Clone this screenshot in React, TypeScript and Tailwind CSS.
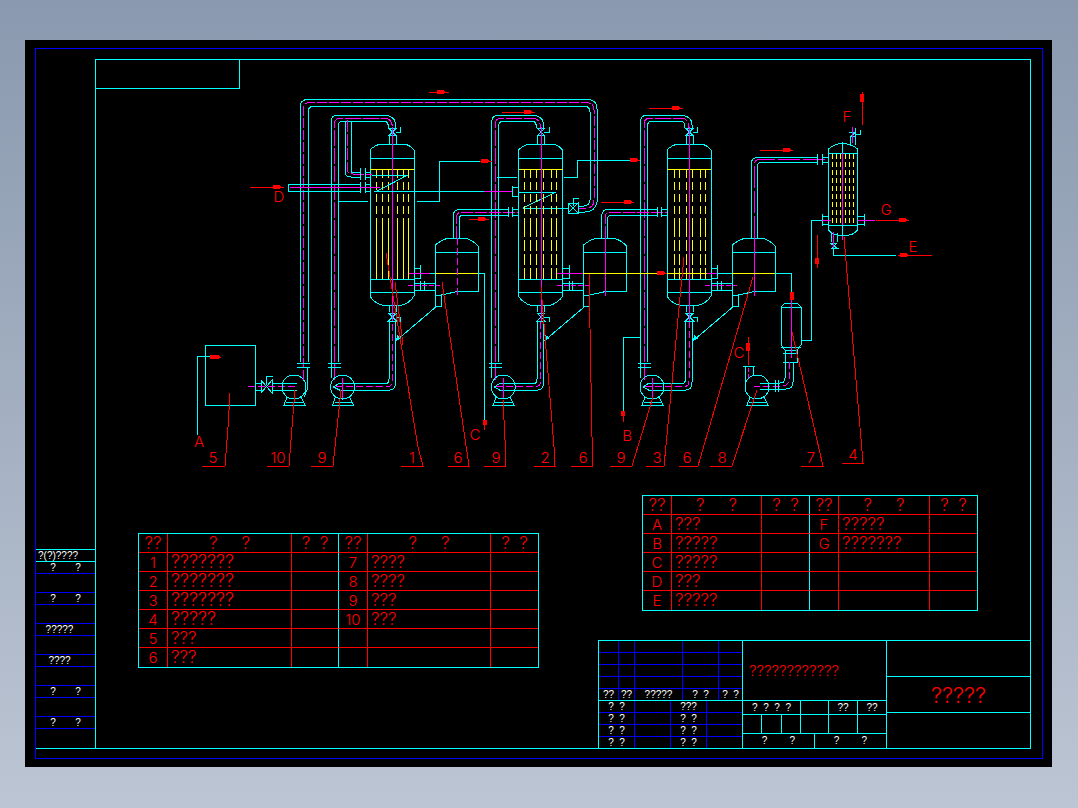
const CY = '#00ffff'
const MG = '#ff00ff'
const YL = '#ffff00'
const RD = '#ff0000'
const DASH = '7 3'

function L({ d, c = CY, dash }: { d: string; c?: string; dash?: string }) {
  return <path d={d} fill="none" stroke={c} strokeWidth={1} strokeDasharray={dash} />
}

// red flow arrow, thin tail with a short thick head
function FlowH({ x1, x2, y, hx, hw = 9 }: { x1: number; x2: number; y: number; hx: number; hw?: number }) {
  return (
    <g>
      <L d={`M${x1} ${y}H${x2}`} c={RD} />
      <path d={`M${hx} ${y - 2}H${hx + hw - 3}L${hx + hw} ${y}L${hx + hw - 3} ${y + 2}H${hx}Z`} fill={RD} />
    </g>
  )
}

function FlowV({ x, y1, y2, hy, hh = 8 }: { x: number; y1: number; y2: number; hy: number; hh?: number }) {
  return (
    <g>
      <L d={`M${x} ${y1}V${y2}`} c={RD} />
      <path d={`M${x - 2} ${hy}H${x + 2}V${hy + hh}H${x - 2}Z`} fill={RD} />
    </g>
  )
}

function Label({ x, y, t }: { x: number; y: number; t: string }) {
  return (
    <text x={x} y={y} textAnchor="middle" fill={RD} fontSize={15} fontWeight={300} fontFamily="Inter, sans-serif">
      {t}
    </text>
  )
}

function Pump({ cx, cy = 387 }: { cx: number; cy?: number }) {
  return (
    <g>
      <circle cx={cx} cy={cy} r={12} fill="none" stroke={CY} />
      <L d={`M${cx - 7} ${cy + 10}L${cx - 10} ${cy + 18}H${cx + 11}L${cx + 7} ${cy + 10}`} />
      <L d={`M${cx - 8} ${cy + 15}H${cx + 9}`} />
    </g>
  )
}

function Evaporator({ dx, w = 44, tubes, solid }: { dx: number; w?: number; tubes: number[]; solid: boolean }) {
  const l = 370 + dx
  const r = l + w
  const c = l + w / 2 + 0.5
  return (
    <g>
      <L d={`M${l} 158V150Q${l + 5} 145 ${l + 11} 144H${r - 10}Q${r - 4} 145 ${r} 150V158`} />
      <L d={`M${l} 158H${r}M${l} 158V292M${r} 158V292M${l} 279H${r}M${l} 292H${r}`} />
      <L d={`M${l} 292V296Q${l + 4} 303 ${l + 13} 305.5H${r - 13}Q${r - 4} 303 ${r} 296V292`} />
      <L d={`M${c - 3.5} 135V144M${c + 3.5} 135V144M${c - 3.5} 306V312M${c + 3.5} 306V312`} />
      <L d={`M${l} 169H${r}`} c={YL} />
      {tubes.map((x) => (
        <g key={x}>
          <L d={`M${x} 170V226`} c={YL} dash="8 4" />
          {solid ? <L d={`M${x} 226V279`} c={YL} /> : <L d={`M${x} 226V279`} c={YL} dash="11 3" />}
        </g>
      ))}
      {/* top and bottom valves */}
      <L d={`M${c - 4} 128H${c + 4}L${c - 3} 135H${c + 3}L${c - 4} 128`} />
      <L d={`M${c + 3} 132H${c + 8}V127`} />
      <L d={`M${c - 4} 313H${c + 4}L${c - 4} 321H${c + 4}L${c - 4} 313`} />
      <L d={`M${c + 3} 317H${c + 8}V322`} />
      <L d={`M${c} 127V321`} c={MG} />
      {/* right hand nozzles */}
      <L d={`M${r} 268H${r + 6}M${r} 278H${r + 6}M${r + 6.5} 265V279`} />
      <L d={`M${r} 283H${r + 21}M${r} 290H${r + 21}M${r + 6.5} 281V291M${r + 10} 281V291`} />
      <L d={`M${r - 5} 273H${r + 16}`} c={MG} />
      <L d={`M${r - 6} 285.5H${r + 26}`} c={MG} dash="5 2" />
    </g>
  )
}

function Separator({ dx }: { dx: number }) {
  const l = 435 + dx
  const r = 478 + dx
  return (
    <g>
      <L d={`M${l} 252V245Q${l + 6} 240 ${l + 13} 238H${r - 13}Q${r - 5} 240 ${r} 246V252`} />
      <L d={`M${l} 252H${r}M${r} 252V291H${r - 18}L${l + 6} 295V306H${l}V252`} />
      <L d={`M${l} 295H${l + 6}`} />
      <L d={`M${l} 273H${r}`} c={YL} />
      <L d={`M${l + 22} 238V296`} c={MG} dash={dx === 0 ? DASH : undefined} />
      <L d={`M${l + 2} 306L${l - 38} 340`} />
      <path d={`M${l - 39} 341L${l - 38} 335L${l - 33} 338Z`} fill={CY} />
    </g>
  )
}

// vacuum leg: from pump up and over into the top of the vessel, and back from the bottom
function Loop({ left, c }: { left: number; c: number }) {
  const cx = left + 11.5
  return (
    <g>
      <L d={`M${left} 378V122Q${left} 115 ${left + 7} 115H${c - 11}Q${c + 3} 115 ${c + 3} 125V128`} />
      <L d={`M${left + 7} 362V126Q${left + 7} 121 ${left + 12} 121H${c - 9}Q${c - 4} 121 ${c - 4} 128`} />
      <L d={`M${left + 3.5} 380V124Q${left + 3.5} 118 ${left + 10} 118H${c - 9}Q${c} 118 ${c} 128`} c={MG} dash="16 2" />
      <L d={`M${left - 3} 363H${left + 10}M${left - 3} 367H${left + 10}`} />
      <Pump cx={cx} />
      <L d={`M${cx - 4} 383.5H${c - 7}Q${c - 3.5} 383.5 ${c - 3.5} 379V321M${cx - 4} 390H${c - 3}Q${c + 3} 390 ${c + 3} 382V321`} />
      <L d={`M${cx - 7} 386.5H${c - 4}Q${c} 386 ${c} 381V322`} c={MG} dash={DASH} />
      <L d={`M${cx} 378V398`} c={MG} />
      <L d={`M${cx - 9} 387L${cx - 3} 383M${cx - 9} 387L${cx - 3} 390`} />
    </g>
  )
}

function Link({ dx, ex }: { dx: number; ex: number }) {
  // vapour line from separator up and across into the next vessel
  const o = 453 + dx
  const f = 508 + ex
  return (
    <g>
      <L d={`M${o} 238V217Q${o} 209 ${o + 8} 209H${f}M${o + 6} 238V219Q${o + 6} 215 ${o + 11} 215H${f}`} />
      <L d={`M${o + 3.5} 238V218Q${o + 3.5} 212 ${o + 9} 212H${f + 10}`} c={MG} dash="12 2" />
      <L d={`M${f} 207V217M${f + 4} 207V217M${f + 4} 209H${f + 11}M${f + 4} 215H${f + 11}`} />
    </g>
  )
}

function Diagram() {
  return (
    <svg width="780" height="381" viewBox="180 89 780 381" shapeRendering="crispEdges" className="ml-[84px] block">
      {/* feed tank and pump 10 */}
      <rect x="205.5" y="345.5" width="50" height="60" fill="none" stroke={CY} />
      <L d="M197.5 435V356.5H210" />
      <FlowH x1={210} x2={221} y={357} hx={210} hw={11} />
      <L d="M255 383H261M255 390H261M261 380V393M261 380L272 393V380L261 393V380" />
      <L d="M266 385V376H273M272 383H297M272 390H297" />
      <L d="M248 386.5H297" c={MG} dash={DASH} />
      <Pump cx={294} />
      <L d="M300 362V107Q300 99.5 308 99.5H587Q597 99.5 597 109V202Q595 212 585 212H578" />
      <L d="M308 362V112Q308 106 314 106H584Q590 106 590 112V200Q589 206 584 206H578" />
      <L d="M303.5 380V108Q303.5 102.5 310 102.5H586Q594 102.5 594 110V200Q594 208 586 208H578" c={MG} dash="10 2" />
      <L d="M297 363H310M297 367H310M307 367V390L304 397" />
      <L d="M568 203H578M568 213H578M568 203L578 213V203L568 213V203" />
      <L d="M573 206V198H579" />
      <L d="M523 208H568M523 208L556 192M519 192H556" />

      <Evaporator dx={0} tubes={[376, 382, 388, 397, 403, 408]} solid />
      <Evaporator dx={148.5} tubes={[524, 530, 536, 543, 551, 556]} solid={false} />
      <Evaporator dx={297} tubes={[674, 679, 686, 692, 700, 705]} solid={false} />
      <Separator dx={0} />
      <Separator dx={148.3} />
      <Separator dx={297} />
      <Loop left={331} c={392.5} />
      <Loop left={491.7} c={540.5} />
      <Loop left={640.5} c={689} />
      <Link dx={0} ex={0} />
      <Link dx={148.5} ex={149} />

      {/* evaporator 1 steam inlet and vapour lines */}
      <L d="M345 121V171Q345 177 351 177H360M351 121V172H360" />
      <L d="M347.5 120V170Q348 174 353 174H372" c={MG} dash="12 2" />
      <L d="M360 168V180M365 168V180M365 172H371M365 177H371" />
      <L d="M360 182V193M365 182V193M365 184H371M365 191H371" />
      <L d="M288 184H360M288 191H360M288 184V191" />
      <L d="M290 187.5H380" c={MG} />
      <L d="M372 175H408L377 191M374 191H484" />
      <L d="M484 191H512" c={MG} />
      <L d="M512 186V197M512 187H519M512 196H519" />
      <L d="M338 201H368M417 201H439V161H481" />
      <L d="M497 177H517M564 177H577V160H630" />
      <L d="M640 337H623V412" />
      <L d="M478 273H484.5V420" />
      <L d="M409 273H430" c={MG} />
      <L d="M430 273H435M717 273H732M775 273H791.5V293" />
      <L d="M557 273H583" c={MG} />
      <L d="M583 273H657M667 273H707M732 273H775" c={YL} />

      {/* third vessel to condenser */}
      <L d="M751 238V165Q751 157 759 157H817M757 238V167Q757 162 762 162H817" />
      <L d="M754 238V166Q754 159 761 159H826" c={MG} dash="22 3" />
      <L d="M817 154V165M822 154V165M822 157H828M822 162H828" />

      {/* condenser */}
      <L d="M828.5 153V149Q834 144 842 143.5Q852 144 857.5 149V153M828.5 153H857.5M828.5 153V225M857.5 153V225M828.5 225H857.5" />
      <L d="M828.5 225V230Q832 235 840 235.5H846Q854 235 857.5 230V225" />
      <L d="M842.5 142V240" c={MG} />
      <L d="M842.5 142V153M842.5 225V236" />
      {[832, 836, 840, 845, 849, 853].map((x) => (
        <L key={x} d={`M${x} 154V225`} c={YL} dash="5 3" />
      ))}
      <L d="M850 145V136M855 145V128M849 132H856L851 136H855M855 134H860V130" />
      <L d="M852 127V143" c={MG} />
      <L d="M822 214V226M828 216H822M828 224H822M858 216H864M858 224H864M864 214V226" />
      <L d="M822 220H831M858 220H875" c={MG} />
      <L d="M822 220H811V340H801" />
      <L d="M831 233V242M837 233V242M830 243H837L832 248H837L830 243M833 248V255H896" />
      <L d="M833 232V248" c={MG} />

      {/* receiver 7 and pump 8 */}
      <L d="M781 307V345L785 350H797L801 345V307L797 303H785L781 307M781 307H801M781 347H801" />
      <L d="M791.5 297V358" c={MG} />
      <L d="M785 350V362M797 350V362M783 353H798M783 362H798" />
      <L d="M785 362V378Q785 383 780 383H760M793 362V382Q793 389 786 389H760" />
      <L d="M789 362V380Q788 386 782 386H754" c={MG} dash={DASH} />
      <L d="M775 380V392M778 380V392" />
      <Pump cx={757} />
      <L d="M743 366H755M745 366V383M753 366V376" />
      <L d="M748 368V380" c={MG} dash="4 2" />

      {/* flow arrows */}
      <FlowH x1={429} x2={449} y={92} hx={437} />
      <FlowH x1={502} x2={535} y={112} hx={524} />
      <FlowH x1={649} x2={683} y={108} hx={672} />
      <FlowH x1={760} x2={793} y={150} hx={783} />
      <FlowH x1={601} x2={634} y={202} hx={624} />
      <FlowH x1={469} x2={489} y={219} hx={478} />
      <FlowH x1={250} x2={284} y={187} hx={273} />
      <FlowH x1={876} x2={909} y={220} hx={899} />
      <FlowH x1={898} x2={932} y={255} hx={900} />
      <FlowH x1={480} x2={492} y={161} hx={481} />
      <FlowH x1={630} x2={640} y={160} hx={630} />
      <FlowH x1={657} x2={667} y={273} hx={657} />
      <FlowV x={862} y1={92} y2={125} hy={94} />
      <FlowV x={817} y1={235} y2={268} hy={258} hh={6} />
      <FlowV x={748} y1={337} y2={365} hy={343} />
      <FlowV x={791.5} y1={292} y2={298} hy={292} />
      <FlowV x={623} y1={411} y2={422} hy={411} hh={5} />
      <FlowV x={484.5} y1={420} y2={430} hy={420} hh={5} />

      {/* leaders */}
      <L c={RD} d="M202 466H225L228 427L230 393" />
      <L c={RD} d="M267 466H289L292 427L295 390" />
      <L c={RD} d="M311 466H333L341 390" />
      <L c={RD} d="M401 466H423L418 447L386 253" />
      <L c={RD} d="M395 282L403 345" />
      <L c={RD} d="M448 466H469L442 282" />
      <L c={RD} d="M484 466H505V440L503 400" />
      <L c={RD} d="M534 466H555L554 447L548 373L541 287" />
      <L c={RD} d="M571 466H592L592 437L589 273" />
      <L c={RD} d="M610 466H632L653 397" />
      <L c={RD} d="M646 466H664L672 383L680 297L684 257" />
      <L c={RD} d="M679 466H698L753 277" />
      <L c={RD} d="M710 466H732L757 390" />
      <L c={RD} d="M801 466H823L792 332" />
      <L c={RD} d="M842 463H863L844 237" />

      <Label x={213} y={463} t="5" />
      <Label x={278} y={463} t="10" />
      <Label x={322} y={463} t="9" />
      <Label x={412} y={463} t="1" />
      <Label x={458} y={463} t="6" />
      <Label x={496} y={463} t="9" />
      <Label x={545} y={463} t="2" />
      <Label x={583} y={463} t="6" />
      <Label x={621} y={463} t="9" />
      <Label x={657} y={463} t="3" />
      <Label x={687} y={463} t="6" />
      <Label x={722} y={463} t="8" />
      <Label x={811} y={463} t="7" />
      <Label x={853} y={460} t="4" />
      <Label x={199} y={447} t="A" />
      <Label x={279} y={202} t="D" />
      <Label x={475} y={440} t="C" />
      <Label x={627} y={441} t="B" />
      <Label x={739} y={358} t="C" />
      <Label x={847} y={122} t="F" />
      <Label x={886} y={215} t="G" />
      <Label x={913} y={252} t="E" />
    </svg>
  )
}

const RT = "font-['Inter'] font-light text-[#ff0000] leading-none whitespace-pre"
const WT = "font-['Liberation_Sans'] text-white text-[10px] leading-none whitespace-pre"

const leftRows = [
  ['1', '???????', '7', '????'],
  ['2', '???????', '8', '????'],
  ['3', '???????', '9', '???'],
  ['4', '?????', '10', '???'],
  ['5', '???', '', ''],
  ['6', '???', '', ''],
]

const rightRows = [
  ['A', '???', 'F', '?????'],
  ['B', '?????', 'G', '???????'],
  ['C', '?????', '', ''],
  ['D', '???', '', ''],
  ['E', '?????', '', ''],
]

function PartsTable({ rows, cols, width, wide }: { rows: string[][]; cols: string; width: string; wide?: boolean }) {
  const cells: React.ReactNode[] = []
  const all = [['??', '?     ?', '??', '?     ?'], ...rows]
  all.forEach((r, i) => {
    const last = i === all.length - 1
    const head = i === 0
    ;[0, 2].forEach((k) => {
      const big = wide && k === 0 && i > 0 && i < 5
      cells.push(
        <div key={`${i}-${k}`} className={`flex items-center justify-center border-b border-r border-[#ff0000] ${last ? 'border-b-0' : ''} ${RT} ${head ? 'text-[17px]' : 'text-[15px]'}`}>
          {r[k]}
        </div>,
      )
      cells.push(
        <div key={`${i}-${k}n`} className={`flex items-center ${head ? 'justify-center' : 'pl-[3px]'} border-b border-r border-[#ff0000] ${last ? 'border-b-0' : ''} ${RT} ${big ? 'text-[18px]' : 'text-[17px]'}`}>
          {r[k + 1]}
        </div>,
      )
      cells.push(
        <div key={`${i}-${k}q`} className={`flex items-center justify-center border-b border-b-[#ff0000] ${k === 0 ? 'border-r border-r-[#00ffff]' : ''} ${last ? 'border-b-0' : ''} ${RT} text-[17px]`}>
          {head ? '?  ?' : ''}
        </div>,
      )
    })
  })
  return <div className={`grid auto-rows-[19px] border border-[#00ffff] ${cols} ${width}`}>{cells}</div>
}

function StripRow({ t, shift }: { t?: string; shift?: boolean }) {
  return t ? (
    <div className={`flex h-3 shrink-0 items-center justify-center border-b border-[#0000ff] ${shift ? 'pr-[12px]' : ''} ${WT}`}>{t}</div>
  ) : (
    <div className="h-[19px] shrink-0 border-b border-[#0000ff]" />
  )
}

function LeftStrip() {
  return (
    <div className="flex w-[59px] flex-col justify-end border-b border-[#00ffff]">
      <div className={`flex h-[13px] shrink-0 items-center border-y border-[#00ffff] pl-[2px] ${WT}`}>?(?)????</div>
      <StripRow t="?       ?" />
      <StripRow />
      <StripRow t="?       ?" />
      <StripRow />
      <StripRow t="?????" shift />
      <StripRow />
      <StripRow t="????" shift />
      <StripRow />
      <StripRow t="?       ?" />
      <StripRow />
      <StripRow t="?       ?" />
      <div className="h-[19px] shrink-0" />
    </div>
  )
}

function BlueRow({ cells, cols, h = 'h-3', line = true }: { cells: string[]; cols: string; h?: string; line?: boolean }) {
  return (
    <div className={`grid ${cols} ${h} ${line ? 'border-b border-[#0000ff]' : ''}`}>
      {cells.map((t, i) => (
        <div key={i} className={`flex items-center justify-center ${i < cells.length - 1 ? 'border-r border-[#0000ff]' : ''} ${WT}`}>
          {t}
        </div>
      ))}
    </div>
  )
}

const UP = 'grid-cols-[20px_16px_48px_36px_23px]'
const LO = 'grid-cols-[36px_36px_36px_35px]'

function CyanCell({ t, w, end }: { t?: string; w: string; end?: boolean }) {
  return <div className={`flex items-center justify-center ${w} ${end ? '' : 'border-r border-[#00ffff]'} ${WT}`}>{t}</div>
}

function TitleBlock() {
  return (
    <div className="mt-auto flex h-[108px] w-[432px] border-l border-t border-[#00ffff]">
      <div className="w-[144px] shrink-0 border-r border-[#00ffff]">
        <BlueRow cols={UP} cells={['', '', '', '', '']} />
        <BlueRow cols={UP} cells={['', '', '', '', '']} />
        <BlueRow cols={UP} cells={['', '', '', '', '']} />
        <BlueRow cols={UP} cells={['', '', '', '', '']} />
        <div className={`grid h-3 ${UP} border-b border-[#00ffff]`}>
          {['??', '??', '?????', '?  ?', '?  ?'].map((t, i) => (
            <div key={i} className={`flex items-center justify-center ${i < 4 ? 'border-r border-[#0000ff]' : ''} ${WT}`}>
              {t}
            </div>
          ))}
        </div>
        <BlueRow cols={LO} cells={['?  ?', '', '???', '']} />
        <BlueRow cols={LO} cells={['?  ?', '', '?  ?', '']} />
        <BlueRow cols={LO} cells={['?  ?', '', '?  ?', '']} />
        <BlueRow cols={LO} h="h-[11px]" line={false} cells={['?  ?', '', '?  ?', '']} />
      </div>
      <div className="w-[144px] shrink-0 border-r border-[#00ffff]">
        <div className="flex h-[60px] items-center border-b border-[#00ffff] pl-[6px]">
          <span className={`${RT} text-[15px]`}>????????????</span>
        </div>
        <div className="flex h-[14px] border-b border-[#00ffff]">
          <CyanCell w="w-[58px]" t="?  ?  ?  ?" />
          <CyanCell w="w-[28px]" />
          <CyanCell w="w-[29px]" t="??" />
          <CyanCell w="flex-1" t="??" end />
        </div>
        <div className="flex h-[19px] border-b border-[#00ffff]">
          <CyanCell w="w-[19px]" />
          <CyanCell w="w-[20px]" />
          <CyanCell w="w-[19px]" />
          <CyanCell w="w-[28px]" />
          <CyanCell w="w-[29px]" />
          <CyanCell w="flex-1" end />
        </div>
        <div className="flex h-[14px]">
          <CyanCell w="w-[72px]" t="?        ?" />
          <CyanCell w="flex-1" t="?        ?" end />
        </div>
      </div>
      <div className="flex-1">
        <div className="h-9 border-b border-[#00ffff]" />
        <div className="flex h-9 items-center justify-center border-b border-[#00ffff]">
          <span className={`${RT} text-[22px]`}>?????</span>
        </div>
      </div>
    </div>
  )
}

export default function App() {
  return (
    <div className="h-[808px] w-[1078px] overflow-hidden bg-gradient-to-b from-[#8a99af] to-[#bcc5d3] pl-[25px] pt-[40px]">
      <div className="h-[727px] w-[1027px] bg-black pl-[10px] pt-[8px]">
        <div className="flex h-[711px] w-[1008px] border border-[#0000ff] pt-[10px]">
          <div className="flex h-[690px]">
            <LeftStrip />
            <div className="flex h-[690px] w-[936px] flex-col border border-[#00ffff]">
              <div className="h-[29px] w-[144px] shrink-0 border-b border-r border-[#00ffff]" />
              <Diagram />
              <div className="flex flex-1">
                <div className="w-[502px] pl-[42px] pt-[63px]">
                  <PartsTable rows={leftRows} wide width="w-[401px]" cols="grid-cols-[29px_124px_47px_29px_123px_47px]" />
                </div>
                <div className="flex w-[432px] flex-col pt-[25px]">
                  <div className="pl-[44px]">
                    <PartsTable rows={rightRows} width="w-[336px]" cols="grid-cols-[29px_90px_48px_29px_91px_47px]" />
                  </div>
                  <TitleBlock />
                </div>
              </div>
            </div>
          </div>
        </div>
      </div>
    </div>
  )
}
